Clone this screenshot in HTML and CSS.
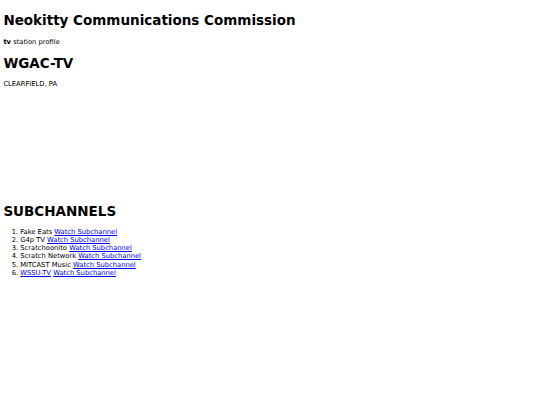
FILE: index.html
```html
<!DOCTYPE html>
<html>
<head>
<meta charset="utf-8">
<title>WGAC-TV</title>
<link rel="stylesheet" href="styles.css">
</head>
<body>
<h1 class="title">Neokitty Communications Commission</h1>
<p class="kind"><b>tv</b> station profile</p>
<h1 class="call">WGAC-TV</h1>
<p class="city">CLEARFIELD, PA</p>
<div class="player"></div>
<h1 class="sub">SUBCHANNELS</h1>
<ol class="subs">
<li>Fake Eats <a href="#">Watch Subchannel</a></li>
<li>G4p TV <a href="#">Watch Subchannel</a></li>
<li>Scratchoonito <a href="#">Watch Subchannel</a></li>
<li>Scratch Network <a href="#">Watch Subchannel</a></li>
<li>MITCAST Music <a href="#">Watch Subchannel</a></li>
<li><a href="#">WSSU-TV</a> <a href="#">Watch Subchannel</a></li>
</ol>
</body>
</html>
```
FILE: styles.css
```css
html, body {
  background: #fff;
}
body {
  margin: 3.375px;
  font-family: "DejaVu Sans", Verdana, sans-serif;
  font-size: 6.75px;
  line-height: 1.2;
  color: #000;
}
h1 {
  font-size: 13.5px;
  font-weight: bold;
  line-height: 1.2;
  margin: 9.05px 0;
}
p {
  margin: 6.75px 0;
}
.kind {
  margin-top: 8.3px;
}
.player {
  height: 99px;
}
.subs {
  margin: 9.05px 0 6.75px;
  padding-left: 16.875px;
}
a {
  color: #0000ee;
}
```
